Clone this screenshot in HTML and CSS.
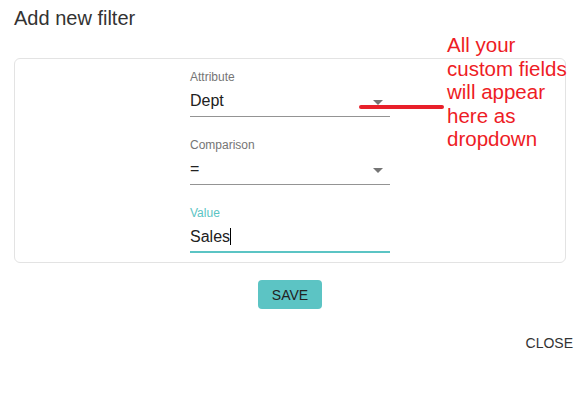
FILE: index.html
```html
<!DOCTYPE html>
<html lang="en">
<head>
  <meta charset="UTF-8" />
  <meta name="viewport" content="width=device-width, initial-scale=1.0" />
  <title>Add new filter</title>
  <link rel="stylesheet" href="styles.css">
</head>
<body>
  <div class="dialog">
    <h2 class="dialog-title">Add new filter</h2>

    <div class="filter-card">
      <div class="field">
        <label>Attribute</label>
        <div class="control">
          <span class="control-value">Dept</span>
          <span class="arrow"></span>
        </div>
      </div>

      <div class="field">
        <label>Comparison</label>
        <div class="control">
          <span class="control-value">=</span>
          <span class="arrow"></span>
        </div>
      </div>

      <div class="field focused">
        <label>Value</label>
        <div class="control">
          <span class="control-value">Sales<span class="caret"></span></span>
        </div>
      </div>
    </div>

    <div class="actions">
      <button class="save-btn">SAVE</button>
    </div>

    <div class="footer">
      <button class="close-btn">CLOSE</button>
    </div>

    <!-- callout drawn over the screenshot -->
    <div class="callout-line"></div>
    <div class="callout-text">All your<br>custom fields<br>will appear<br>here as<br>dropdown</div>
  </div>
</body>
</html>
```

FILE: styles.css
```css
* { box-sizing: border-box; }
body {
  margin: 0;
  font-family: 'Liberation Sans', Arial, sans-serif;
  background: #fff;
  color: #212121;
}
.dialog {
  position: relative;
  width: 580px;
  height: 407px;
  padding: 7px 14px 0;
}
.dialog-title {
  margin: 0;
  font-size: 20px;
  font-weight: normal;
  line-height: 23px;
  color: #333;
}
.filter-card {
  margin-top: 28px;
  border: 1px solid #e3e3e3;
  border-radius: 6px;
  padding: 11px 0 9px;
  display: flex;
  flex-direction: column;
  align-items: center;
}
.field {
  width: 200px;
  margin-bottom: 21px;
}
.field:last-child {
  margin-bottom: 0;
}
.field label {
  display: block;
  font-size: 12px;
  line-height: 14px;
  color: #757575;
}
.control {
  position: relative;
  display: flex;
  align-items: flex-start;
  margin-top: 5px;
  padding-top: 2px;
  height: 28px;
  border-bottom: 1px solid #949494;
  font-size: 16px;
  line-height: 20px;
  color: #212121;
}
.control-value {
  flex-grow: 1;
}
.arrow {
  position: absolute;
  right: 7px;
  top: 11px;
  width: 0;
  height: 0;
  border-left: 5px solid transparent;
  border-right: 5px solid transparent;
  border-top: 5px solid #757575;
}
.focused label {
  color: #5bc4c4;
}
.focused .control {
  height: 28px;
  border-bottom: 2px solid #5bc4c4;
}
.caret {
  display: inline-block;
  width: 1px;
  height: 17px;
  background: #000;
  vertical-align: -3px;
}
.actions {
  display: flex;
  justify-content: center;
  margin-top: 17px;
}
.save-btn {
  width: 64px;
  height: 29px;
  border: none;
  border-radius: 4px;
  background: #5cc4c4;
  color: #222;
  font-family: inherit;
  font-size: 14px;
  padding: 0;
}
.footer {
  display: flex;
  justify-content: flex-end;
  margin-top: 26px;
  margin-right: -7px;
}
.close-btn {
  border: none;
  background: none;
  padding: 0;
  font-family: inherit;
  font-size: 14px;
  line-height: 16px;
  color: #333;
}
.callout-line {
  position: absolute;
  left: 359px;
  top: 105px;
  width: 85px;
  height: 4px;
  border-radius: 2px;
  background: #e8202a;
}
.callout-text {
  position: absolute;
  left: 447px;
  top: 33px;
  font-size: 20.5px;
  line-height: 23.5px;
  color: #ee1c25;
}
```
